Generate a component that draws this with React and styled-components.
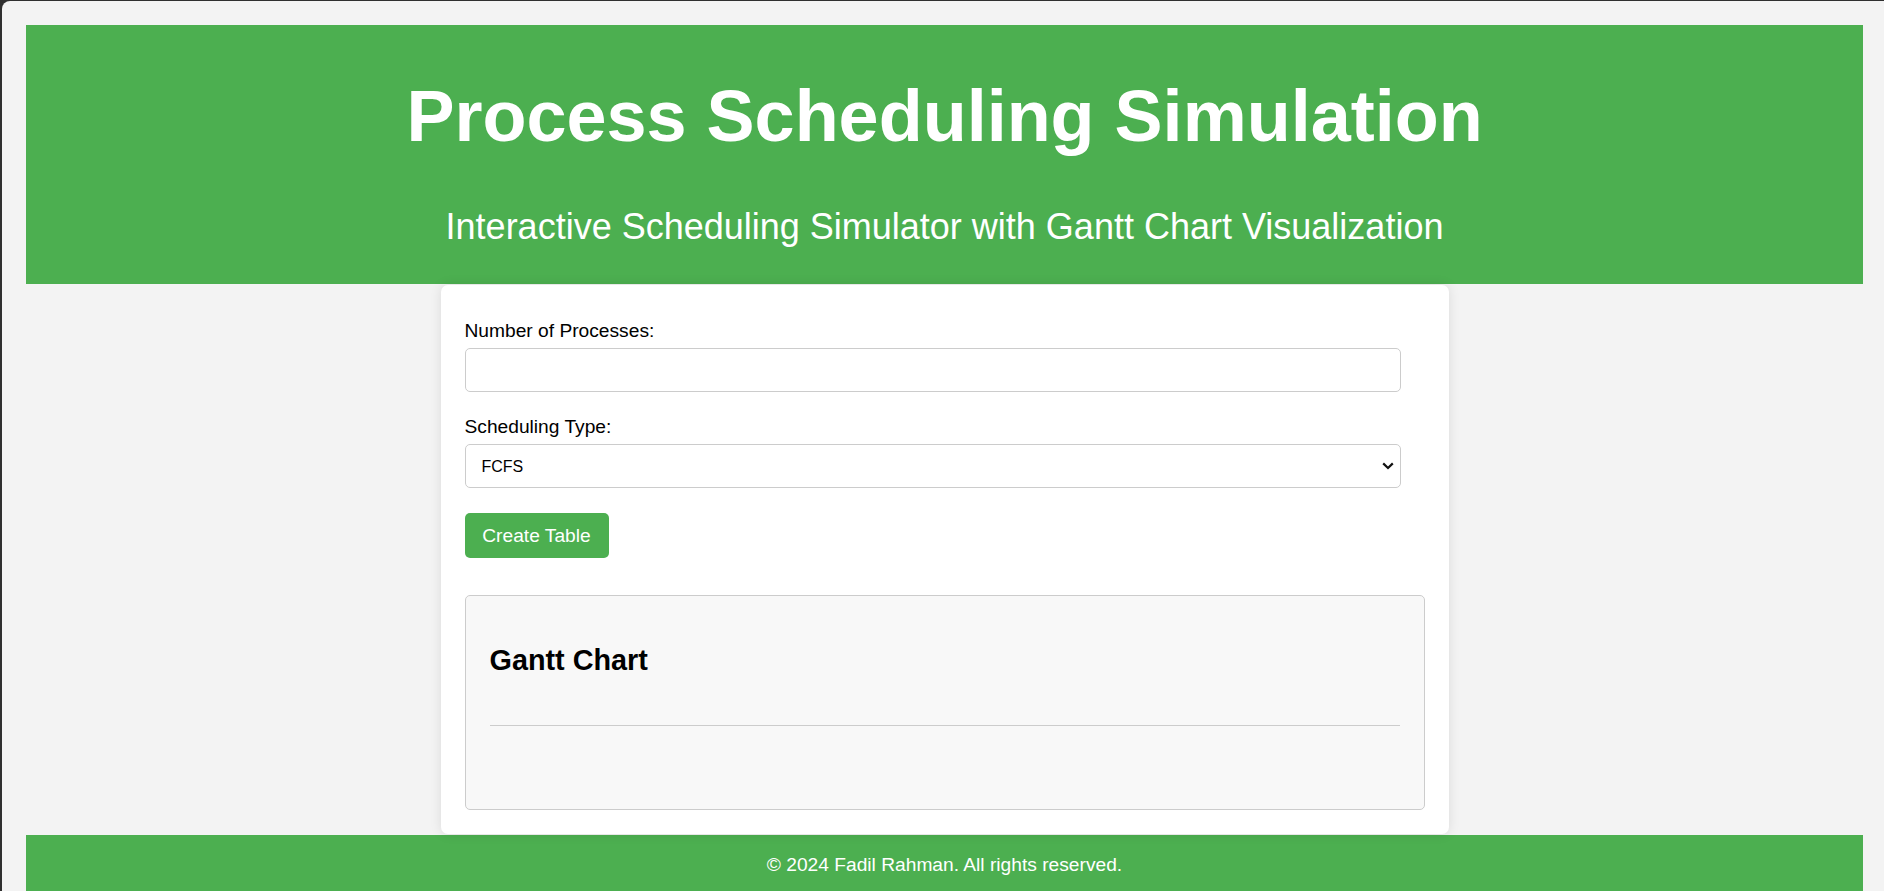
import React from 'react'
import styled, { createGlobalStyle } from 'styled-components'

const GlobalStyle = createGlobalStyle`
  html, body {
    margin: 0;
    padding: 0;
    height: 100%;
    overflow: hidden;
    background: #2f2f2f;
  }
  * {
    box-sizing: border-box;
  }
`;

const App = () => {
  return (
    <>
      <GlobalStyle />
      <Window>
        <Header>
          <Title>Process Scheduling Simulation</Title>
          <Subtitle>Interactive Scheduling Simulator with Gantt Chart Visualization</Subtitle>
        </Header>
        <Card>
          <FieldLabel htmlFor="num">Number of Processes:</FieldLabel>
          <TextInput id="num" type="number" />
          <FieldLabel htmlFor="type">Scheduling Type:</FieldLabel>
          <SelectWrap>
            <Select id="type" defaultValue="FCFS">
              <option value="FCFS">FCFS</option>
              <option value="SJF">SJF</option>
              <option value="RR">Round Robin</option>
              <option value="Priority">Priority</option>
            </Select>
            <Chevron viewBox="0 0 12 8" width="12" height="8">
              <path d="M1.2 1.4 L6 6 L10.8 1.4" fill="none" stroke="#111" strokeWidth="2.2" />
            </Chevron>
          </SelectWrap>
          <CreateButton>Create Table</CreateButton>
          <GanttBox>
            <GanttTitle>Gantt Chart</GanttTitle>
            <GanttLine />
            <GanttArea />
          </GanttBox>
        </Card>
        <Footer>© 2024 Fadil Rahman. All rights reserved.</Footer>
      </Window>
    </>
  )
}

export default App

const Window = styled.div`
  margin: 1px 0 0 2px;
  min-height: 890px;
  padding: 24px 21px 0 24px;
  background: #f3f3f3;
  border-top-left-radius: 8px;
  font-family: "Liberation Sans", Arial, sans-serif;
  color: #000;
`;

const Header = styled.header`
  background: #4caf50;
  color: #fff;
  text-align: center;
  padding: 50px 0 37px;
`;

const Title = styled.h1`
  margin: 0 0 48px;
  font-size: 72px;
  line-height: 83px;
  font-weight: bold;
`;

const Subtitle = styled.p`
  margin: 0;
  font-size: 36px;
  line-height: 41px;
`;

const Card = styled.main`
  position: relative;
  z-index: 1;
  width: 1008px;
  margin: 1px auto 1px;
  padding: 35px 24px 24px;
  background: #fff;
  border-radius: 7px;
  box-shadow: 0 0 12px rgba(0, 0, 0, 0.1);
`;

const FieldLabel = styled.label`
  display: block;
  font-size: 19.2px;
  line-height: 22px;
  margin-bottom: 6px;
`;

const TextInput = styled.input`
  display: block;
  width: 936px;
  height: 44px;
  margin: 0 0 24px;
  padding: 0 16px;
  border: 1px solid #ccc;
  border-radius: 5px;
  font-family: inherit;
  font-size: 16px;
  outline: none;
  background: #fff;
`;

const SelectWrap = styled.div`
  position: relative;
  width: 936px;
  margin-bottom: 25px;
`;

const Select = styled.select`
  display: block;
  width: 100%;
  height: 44px;
  padding: 0 16px;
  border: 1px solid #ccc;
  border-radius: 5px;
  font-family: "Liberation Sans", Arial, sans-serif;
  font-size: 16px;
  color: #000;
  background: #fff;
  appearance: none;
  -webkit-appearance: none;
  outline: none;
`;

const Chevron = styled.svg`
  position: absolute;
  right: 7px;
  top: 18px;
  pointer-events: none;
`;

const CreateButton = styled.button`
  display: block;
  width: 144px;
  height: 45px;
  padding: 0;
  border: none;
  border-radius: 5px;
  background: #4caf50;
  color: #fff;
  font-family: inherit;
  font-size: 19.2px;
  cursor: pointer;
`;

const GanttBox = styled.section`
  margin-top: 37px;
  padding: 0 24px;
  background: #f8f8f8;
  border: 1px solid #ccc;
  border-radius: 5px;
`;

const GanttTitle = styled.h2`
  margin: 48px 0 48px;
  font-size: 28.8px;
  line-height: 33px;
  font-weight: bold;
`;

const GanttLine = styled.hr`
  margin: 0;
  border: none;
  border-top: 1px solid #ccc;
`;

const GanttArea = styled.div`
  height: 83px;
`;

const Footer = styled.footer`
  background: #4caf50;
  color: #fff;
  text-align: center;
  padding: 19px 0;
  font-size: 19.2px;
  line-height: 22px;
`;
